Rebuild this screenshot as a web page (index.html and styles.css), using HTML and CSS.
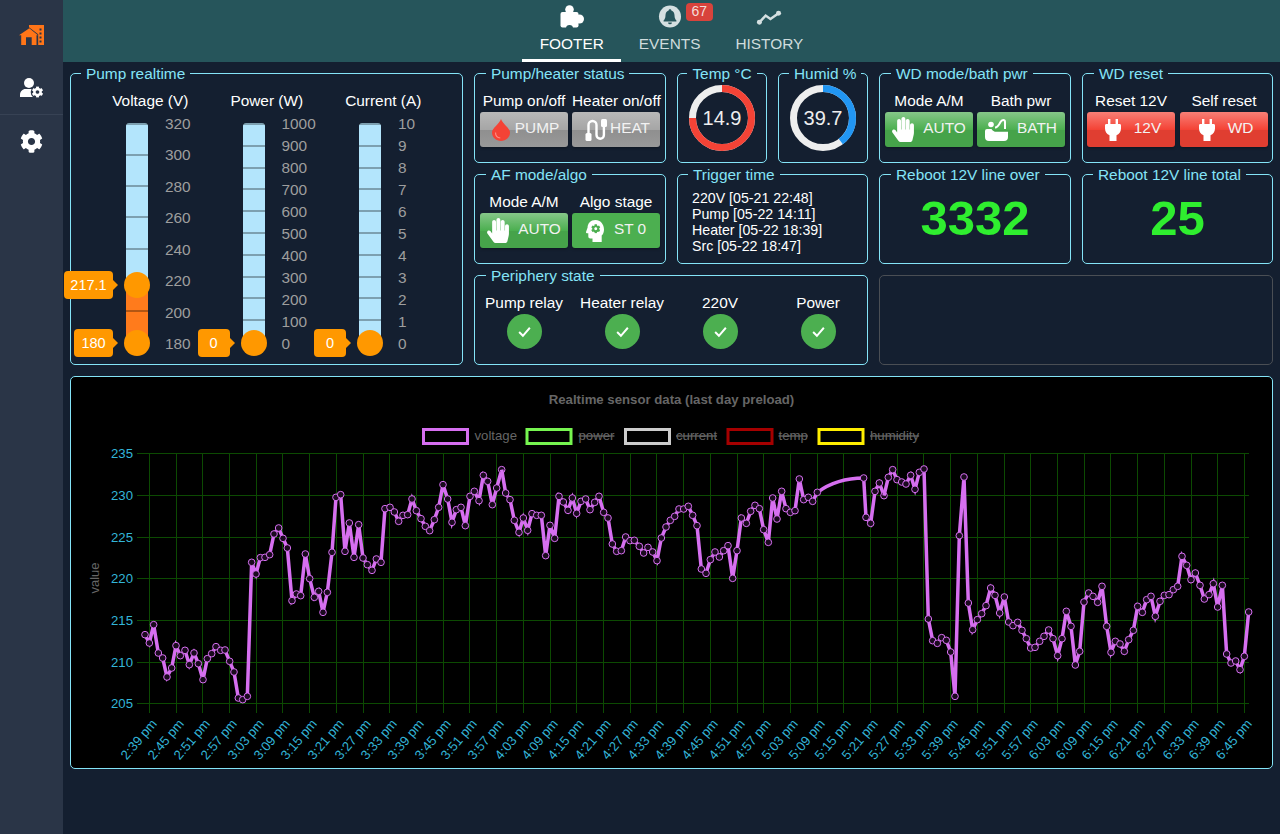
FILE: index.html
```html
<!DOCTYPE html>
<html lang="en">
<head>
<meta charset="utf-8">
<title>Pump dashboard</title>
<link rel="stylesheet" href="styles.css">
</head>
<body>
<svg class="defs" width="0" height="0" aria-hidden="true">
  <symbol id="i-cog" viewBox="0 0 512 512"><path d="M487.4 315.7l-42.6-24.6c4.3-23.2 4.3-47 0-70.2l42.6-24.6c4.9-2.8 7.1-8.6 5.5-14-11.1-35.6-30-67.8-54.7-94.6-3.8-4.1-10-5.1-14.8-2.3L380.8 110c-17.9-15.4-38.5-27.3-60.8-35.1V25.8c0-5.6-3.9-10.5-9.4-11.7-36.7-8.2-74.3-7.8-109.2 0-5.5 1.2-9.4 6.1-9.4 11.7V75c-22.2 7.9-42.8 19.8-60.8 35.1L88.7 85.5c-4.9-2.8-11-1.9-14.8 2.3-24.7 26.7-43.6 58.9-54.7 94.6-1.7 5.4.6 11.2 5.5 14L67.3 221c-4.3 23.2-4.3 47 0 70.2l-42.6 24.6c-4.9 2.8-7.1 8.6-5.5 14 11.1 35.6 30 67.8 54.7 94.6 3.8 4.1 10 5.1 14.8 2.3l42.6-24.6c17.9 15.4 38.5 27.3 60.8 35.1v49.2c0 5.6 3.9 10.5 9.4 11.7 36.7 8.2 74.3 7.8 109.2 0 5.5-1.2 9.4-6.1 9.4-11.7v-49.2c22.2-7.9 42.8-19.8 60.8-35.1l42.6 24.6c4.9 2.8 11 1.9 14.8-2.3 24.7-26.7 43.6-58.9 54.7-94.6 1.5-5.5-.7-11.3-5.6-14.1zM256 336c-44.1 0-80-35.9-80-80s35.9-80 80-80 80 35.9 80 80-35.9 80-80 80z"/></symbol>
  <symbol id="i-hand" viewBox="0 0 448 512"><path d="M408.781 128.007C386.356 127.578 368 146.36 368 168.79V256h-8V79.79c0-22.43-18.356-41.212-40.781-40.783C297.488 39.423 280 57.169 280 79v177h-8V40.79C272 18.36 253.644-.422 231.219.007 209.488.423 192 18.169 192 40v216h-8V80.79c0-22.43-18.356-41.212-40.781-40.783C121.488 40.423 104 58.169 104 80v235.992l-31.648-43.519c-12.993-17.866-38.009-21.817-55.877-8.823-17.865 12.994-21.815 38.01-8.822 55.877l125.601 172.705A48 48 0 0 0 172.073 512h197.59c22.274 0 41.622-15.324 46.724-37.006l26.508-112.66a192.011 192.011 0 0 0 5.104-43.975V168c.001-21.831-17.487-39.577-39.218-39.993z"/></symbol>
  <symbol id="i-plug" viewBox="0 0 16 22"><path d="M3 0h2.400v5h5.200V0H13v5h1.600c.8 0 1.400.6 1.400 1.400v3.100c0 3.300-1.900 5.800-4.500 6.700V22h-7v-5.800C1.900 15.300 0 12.800 0 9.500V6.400C0 5.600.6 5 1.400 5H3z"/></symbol>
  <marker id="dot" markerUnits="userSpaceOnUse" markerWidth="28" markerHeight="28" refX="14" refY="14" viewBox="0 0 28 28"><circle cx="14" cy="14" r="10" fill="#1a0a1e" stroke="#d66ff0" stroke-width="3"/></marker>
</svg>

<div class="app">
  <nav class="sidebar">
    <a class="side-item">
      <svg class="icon-home" viewBox="0 0 25 21"><path fill-rule="evenodd" d="M10.300 3.300L19 10.200h-1.500V20h-4.800v-7.800H7V20H2.200v-9.800H0z"/><path d="M10 0L25 0v20h-5.800V9.200L10 2.200zM20.500 3.500v2h2v-2zM20.500 7.500v2h2v-2zM20.500 11.500v2h2v-2zM20.500 15.500v2h2v-2z" fill-rule="evenodd"/></svg>
    </a>
    <a class="side-item side-item-rule">
      <svg class="icon-user" viewBox="0 0 24 20"><circle cx="9" cy="5" r="5"/><path d="M0 19v-2.500C0 13.500 2.500 11 5.500 11h7c.6 0 1.200.1 1.700.3V19z"/><circle cx="17.500" cy="14" r="6.800" class="icon-user-halo"/><use href="#i-cog" x="11.700" y="8.200" width="11.600" height="11.600"/></svg>
    </a>
    <a class="side-item">
      <svg class="icon-cog"><use href="#i-cog"/></svg>
    </a>
  </nav>

  <div class="main">
    <header class="topbar">
      <a class="tab tab-active">
        <svg class="tab-icon" viewBox="0 0 26 23"><rect x="1.500" y="7" width="18" height="15.500" rx="2"/><circle cx="10.500" cy="4.500" r="4.300"/><circle cx="20.500" cy="14" r="4.500"/><circle class="bell" cx="10.500" cy="23.500" r="3.500"/></svg>
        <span>FOOTER</span>
      </a>
      <a class="tab">
        <svg class="tab-icon" viewBox="0 0 24 24"><circle cx="12" cy="12" r="11.500"/><path class="bell" d="M12 4.500c-.8 0-1.400.6-1.400 1.300C8.400 6.400 7.300 8.500 7.300 10.800c0 3-1 4.500-2 5.500v1h13.400v-1c-1-1-2-2.500-2-5.500 0-2.300-1.100-4.400-3.300-5C13.400 5.100 12.800 4.500 12 4.500zM10 18.200a2 2 0 0 0 4 0z"/></svg>
        <span>EVENTS</span>
        <b class="badge">67</b>
      </a>
      <a class="tab">
        <svg class="tab-icon" viewBox="0 0 26 24"><polyline class="trend" points="3,18 9.500,11 14.500,14.500 23,8.500"/><circle cx="3" cy="18" r="2.600"/><circle cx="23" cy="8.500" r="2.600"/></svg>
        <span>HISTORY</span>
      </a>
    </header>

    <main class="content">
      <section class="dashboard">
        <fieldset class="panel panel-pump">
          <legend class="legend-near">Pump realtime</legend>
          <div class="sliders">
            <div class="slider">
              <div class="slider-title">Voltage (V)</div>
              <div class="slider-body">
                <div class="track">
                  <div class="fill" style="height:26.5%"></div>
                  <i></i><i></i><i></i><i></i><i></i><i></i><i></i><i></i>
                  <div class="thumb" style="bottom:26.5%"><span class="tip tip-wide">217.1</span></div>
                  <div class="thumb" style="bottom:0"><span class="tip tip-mid">180</span></div>
                </div>
                <div class="scale"><span>320</span><span>300</span><span>280</span><span>260</span><span>240</span><span>220</span><span>200</span><span>180</span></div>
              </div>
            </div>
            <div class="slider">
              <div class="slider-title">Power (W)</div>
              <div class="slider-body">
                <div class="track">
                  <i></i><i></i><i></i><i></i><i></i><i></i><i></i><i></i><i></i><i></i><i></i>
                  <div class="thumb" style="bottom:0"><span class="tip">0</span></div>
                </div>
                <div class="scale"><span>1000</span><span>900</span><span>800</span><span>700</span><span>600</span><span>500</span><span>400</span><span>300</span><span>200</span><span>100</span><span>0</span></div>
              </div>
            </div>
            <div class="slider">
              <div class="slider-title">Current (A)</div>
              <div class="slider-body">
                <div class="track">
                  <i></i><i></i><i></i><i></i><i></i><i></i><i></i><i></i><i></i><i></i><i></i>
                  <div class="thumb" style="bottom:0"><span class="tip">0</span></div>
                </div>
                <div class="scale"><span>10</span><span>9</span><span>8</span><span>7</span><span>6</span><span>5</span><span>4</span><span>3</span><span>2</span><span>1</span><span>0</span></div>
              </div>
            </div>
          </div>
        </fieldset>

        <fieldset class="panel">
          <legend>Pump/heater status</legend>
          <div class="pair">
            <div class="control"><div class="caption">Pump on/off</div>
              <button class="btn btn-gray gap-5">
                <svg class="icon-drop" viewBox="0 0 18 22"><path d="M9 0c1.500 5 9 9 9 13.500C18 18.200 14 22 9 22S0 18.200 0 13.500C0 9 7.500 5 9 0z"/><path class="drop-shine" d="M3.500 13.500c0 3 2 5.200 4.800 5.500"/></svg>
                <span>PUMP</span></button></div>
            <div class="control"><div class="caption">Heater on/off</div>
              <button class="btn btn-gray gap-1">
                <svg class="icon-heat" viewBox="0 0 24 24"><path d="M3.500 18V7a4 4 0 0 1 8 0v10a3.700 3.700 0 0 0 7.400 0V6"/><rect x="0.500" y="15" width="6" height="8" rx="1.500"/><rect x="16" y="1" width="6" height="8" rx="1.500"/></svg>
                <span>HEAT</span></button></div>
          </div>
        </fieldset>

        <fieldset class="panel">
          <legend class="legend-center">Temp °C</legend>
          <svg class="gauge" viewBox="0 0 66 66"><circle class="gauge-base" cx="33" cy="33" r="29.500"/><circle class="gauge-arc gauge-red" cx="33" cy="33" r="29.500" pathLength="100" stroke-dasharray="75 100" transform="rotate(-90 33 33)"/><text x="33" y="40">14.9</text></svg>
        </fieldset>

        <fieldset class="panel">
          <legend class="legend-near">Humid %</legend>
          <svg class="gauge" viewBox="0 0 66 66"><circle class="gauge-base" cx="33" cy="33" r="29.500"/><circle class="gauge-arc gauge-blue" cx="33" cy="33" r="29.500" pathLength="100" stroke-dasharray="39.700 100" transform="rotate(-90 33 33)"/><text x="33" y="40">39.7</text></svg>
        </fieldset>

        <fieldset class="panel">
          <legend>WD mode/bath pwr</legend>
          <div class="pair">
            <div class="control"><div class="caption">Mode A/M</div>
              <button class="btn btn-green gap-9"><svg class="icon-hand"><use href="#i-hand"/></svg><span>AUTO</span></button></div>
            <div class="control"><div class="caption">Bath pwr</div>
              <button class="btn btn-green gap-9">
                <svg class="icon-bath" viewBox="0 0 23 23"><circle cx="6" cy="6.500" r="2.800"/><path class="bath-pipe" d="M10 9.500C12 9.500 14 7 15.500 4C17 1 20 1.500 20 4V11"/><path d="M2 11h4.500c1.200 2 3 3 5.500 2.800h11V19a4 4 0 0 1-4 4H4a4 4 0 0 1-4-4v-6a2 2 0 0 1 2-2z"/></svg>
                <span>BATH</span></button></div>
          </div>
        </fieldset>

        <fieldset class="panel">
          <legend>WD reset</legend>
          <div class="pair pair-wide">
            <div class="control"><div class="caption">Reset 12V</div>
              <button class="btn btn-red gap-13"><svg class="icon-plug"><use href="#i-plug"/></svg><span>12V</span></button></div>
            <div class="control"><div class="caption">Self reset</div>
              <button class="btn btn-red gap-13"><svg class="icon-plug"><use href="#i-plug"/></svg><span>WD</span></button></div>
          </div>
        </fieldset>

        <fieldset class="panel">
          <legend>AF mode/algo</legend>
          <div class="pair">
            <div class="control"><div class="caption">Mode A/M</div>
              <button class="btn btn-green gap-9"><svg class="icon-hand"><use href="#i-hand"/></svg><span>AUTO</span></button></div>
            <div class="control"><div class="caption">Algo stage</div>
              <button class="btn btn-flat gap-10">
                <svg class="icon-head" viewBox="0 0 18 22"><path d="M9.500 0C4.600 0 1.600 3.400 1.600 7.600L0 12c-.2.600.2 1.200.9 1.200h1.400v3.400c0 1.100.9 2 2 2h2.200V22h9.200v-6.400c1.500-1.500 2.300-3.700 2.300-6.200C18 4.200 14.400 0 9.500 0z"/><use class="icon-head-cog" href="#i-cog" x="5" y="4" width="9.500" height="9.500"/></svg>
                <span>ST 0</span></button></div>
          </div>
        </fieldset>

        <fieldset class="panel panel-trigger">
          <legend class="legend-near">Trigger time</legend>
          <div class="trigger">220V [05-21 22:48]<br>Pump [05-22 14:11]<br>Heater [05-22 18:39]<br>Src [05-22 18:47]</div>
        </fieldset>

        <fieldset class="panel">
          <legend>Reboot 12V line over</legend>
          <div class="big">3332</div>
        </fieldset>

        <fieldset class="panel">
          <legend class="legend-near">Reboot 12V line total</legend>
          <div class="big">25</div>
        </fieldset>

        <fieldset class="panel panel-periphery">
          <legend>Periphery state</legend>
          <div class="states">
            <div class="state"><div class="caption">Pump relay</div><span class="ok"><svg viewBox="0 0 14 14"><polyline points="2,7.500 5.500,11 12,3.500"/></svg></span></div>
            <div class="state"><div class="caption">Heater relay</div><span class="ok"><svg viewBox="0 0 14 14"><polyline points="2,7.500 5.500,11 12,3.500"/></svg></span></div>
            <div class="state"><div class="caption">220V</div><span class="ok"><svg viewBox="0 0 14 14"><polyline points="2,7.500 5.500,11 12,3.500"/></svg></span></div>
            <div class="state"><div class="caption">Power</div><span class="ok"><svg viewBox="0 0 14 14"><polyline points="2,7.500 5.500,11 12,3.500"/></svg></span></div>
          </div>
        </fieldset>

        <div class="panel-empty"></div>
      </section>

      <section class="chart">
        <svg viewBox="71 377 1201 391" class="chart-svg">
          <text class="c-title" x="671.500" y="403.500">Realtime sensor data (last day preload)</text>

          <g class="c-legend">
            <rect x="423.500" y="429.500" width="44" height="14" stroke="#d66ff0"/><text x="474.500" y="440">voltage</text>
            <rect x="527" y="429.500" width="44" height="14" stroke="#76f550"/><text class="off" x="578.500" y="440">power</text>
            <rect x="625.500" y="429.500" width="44" height="14" stroke="#cccccc"/><text class="off" x="676" y="440">current</text>
            <rect x="728" y="429.500" width="44" height="14" stroke="#a50000"/><text class="off" x="778.500" y="440">temp</text>
            <rect x="819" y="429.500" width="44" height="14" stroke="#ffee00"/><text class="off" x="870" y="440">humidity</text>
          </g>

          <path class="c-grid" d="M137 453.500H1249M137 495.500H1249M137 537.500H1249M137 578.500H1249M137 620.500H1249M137 662.500H1249M137 703.500H1249
          M149.500 453V713M176.500 453V713M202.500 453V713M229.500 453V713M256.500 453V713M282.500 453V713M309.500 453V713M336.500 453V713M363.500 453V713M389.500 453V713M416.500 453V713M443.500 453V713M469.500 453V713M496.500 453V713M523.500 453V713M550.500 453V713M576.500 453V713M603.500 453V713M630.500 453V713M656.500 453V713M683.500 453V713M710.500 453V713M737.500 453V713M763.500 453V713M790.500 453V713M817.500 453V713M843.500 453V713M870.500 453V713M897.500 453V713M923.500 453V713M950.500 453V713M977.500 453V713M1004.500 453V713M1030.500 453V713M1057.500 453V713M1084.500 453V713M1110.500 453V713M1137.500 453V713M1164.500 453V713M1191.500 453V713M1217.500 453V713M1244.500 453V713"/>

          <g class="c-yticks">
            <text x="133" y="458">235</text><text x="133" y="499.500">230</text><text x="133" y="541.500">225</text><text x="133" y="583">220</text><text x="133" y="624.500">215</text><text x="133" y="666.500">210</text><text x="133" y="708">205</text>
          </g>
          <text class="c-axis" transform="translate(99 578) rotate(-90)">value</text>

          <g class="c-xticks">
            <text transform="translate(157.500 724) rotate(-50)">2:39 pm</text><text transform="translate(184.500 724) rotate(-50)">2:45 pm</text><text transform="translate(210.500 724) rotate(-50)">2:51 pm</text><text transform="translate(237.500 724) rotate(-50)">2:57 pm</text><text transform="translate(264.500 724) rotate(-50)">3:03 pm</text><text transform="translate(290.500 724) rotate(-50)">3:09 pm</text><text transform="translate(317.500 724) rotate(-50)">3:15 pm</text><text transform="translate(344.500 724) rotate(-50)">3:21 pm</text><text transform="translate(371.500 724) rotate(-50)">3:27 pm</text><text transform="translate(397.500 724) rotate(-50)">3:33 pm</text><text transform="translate(424.500 724) rotate(-50)">3:39 pm</text><text transform="translate(451.500 724) rotate(-50)">3:45 pm</text><text transform="translate(477.500 724) rotate(-50)">3:51 pm</text><text transform="translate(504.500 724) rotate(-50)">3:57 pm</text><text transform="translate(531.500 724) rotate(-50)">4:03 pm</text><text transform="translate(558.500 724) rotate(-50)">4:09 pm</text><text transform="translate(584.500 724) rotate(-50)">4:15 pm</text><text transform="translate(611.500 724) rotate(-50)">4:21 pm</text><text transform="translate(638.500 724) rotate(-50)">4:27 pm</text><text transform="translate(664.500 724) rotate(-50)">4:33 pm</text><text transform="translate(691.500 724) rotate(-50)">4:39 pm</text><text transform="translate(718.500 724) rotate(-50)">4:45 pm</text><text transform="translate(745.500 724) rotate(-50)">4:51 pm</text><text transform="translate(771.500 724) rotate(-50)">4:57 pm</text><text transform="translate(798.500 724) rotate(-50)">5:03 pm</text><text transform="translate(825.500 724) rotate(-50)">5:09 pm</text><text transform="translate(851.500 724) rotate(-50)">5:15 pm</text><text transform="translate(878.500 724) rotate(-50)">5:21 pm</text><text transform="translate(905.500 724) rotate(-50)">5:27 pm</text><text transform="translate(931.500 724) rotate(-50)">5:33 pm</text><text transform="translate(958.500 724) rotate(-50)">5:39 pm</text><text transform="translate(985.500 724) rotate(-50)">5:45 pm</text><text transform="translate(1012.500 724) rotate(-50)">5:51 pm</text><text transform="translate(1038.500 724) rotate(-50)">5:57 pm</text><text transform="translate(1065.500 724) rotate(-50)">6:03 pm</text><text transform="translate(1092.500 724) rotate(-50)">6:09 pm</text><text transform="translate(1118.500 724) rotate(-50)">6:15 pm</text><text transform="translate(1145.500 724) rotate(-50)">6:21 pm</text><text transform="translate(1172.500 724) rotate(-50)">6:27 pm</text><text transform="translate(1199.500 724) rotate(-50)">6:33 pm</text><text transform="translate(1225.500 724) rotate(-50)">6:39 pm</text><text transform="translate(1252.500 724) rotate(-50)">6:45 pm</text>
          </g>

          <g transform="translate(70 375) scale(.33333)">
            <path class="c-line" marker-start="url(#dot)" marker-mid="url(#dot)" marker-end="url(#dot)" d="M225 779L238 804 251 749 265 834 278 849 291 906 305 879 318 812 331 842 345 826 358 869 372 834 385 866 399 914 412 851 425 836 438 815 452 826 465 825 479 859 492 891 505 969 518 974 532 964 545 562 558 597 571 548 585 547 599 539 612 477 626 459 639 490 652 519 666 677 679 657 692 662 706 537 719 611 733 667 746 649 759 712 772 652 786 532 798 367 812 359 825 529 838 444 852 547 866 449 879 549 892 569 906 586 919 552 933 562 945 401 960 397 973 411 986 439 999 421 1013 419 1026 372 1039 407 1053 431 1066 454 1079 467 1093 434 1106 397 1119 329 1133 372 1146 442 1159 404 1173 397 1186 452 1200 364 1213 349 1227 377 1240 301 1253 319 1267 389 1280 339 1295 284"/>
          </g>
          <g transform="translate(500 440) scale(.33333)">
            <path class="c-line" marker-mid="url(#dot)" marker-end="url(#dot)" d="M5 89L17 159 30 179 43 241 57 277 70 234 83 271 96 221 110 226 124 226 137 347 150 256 164 295 177 169 190 186 204 211 217 174 230 220 243 184 257 177 270 209 284 187 297 169 311 217 324 234 337 312 350 334 364 332 377 291 390 302 403 301 418 319 431 339 444 322 458 336 471 362 484 294 498 261 511 241 524 229 537 207 551 207 565 199 578 226 591 257 604 387 618 400 631 359 645 336 658 351 671 332 684 317 698 415 711 332 724 234 739 250 752 214 765 196 778 206 791 269 805 307 818 174 831 237 845 154 858 206 871 217 885 212 898 117 911 179 925 172 938 184 952 157C1000 122 1045 114 1091 114L1098 232 1112 250 1125 154 1138 129 1152 167"/>
          </g>
          <g transform="translate(880 440) scale(.33333)">
            <path class="c-line" marker-mid="url(#dot)" marker-end="url(#dot)" d="M12 167L25 112 38 89 51 119 65 126 78 132 92 106 105 148 118 97 132 87 145 537 158 602 172 610 185 593 199 601 212 636 225 769 238 287 252 111 265 489 278 569 292 539 305 521 318 497 332 444 345 466 359 519 373 471 386 546 399 557 413 547 426 571 439 596 452 624 465 622 479 604 492 589 506 570 519 596 533 647 546 596 559 514 573 559 586 675 599 634 612 486 626 459 639 469 653 487 666 439 680 559 693 637 706 604 720 612 733 634 746 599 760 571 773 499 787 517 800 479 813 469 826 529 840 484 853 466 867 464 880 449 893 439 906 349 920 376 933 419 946 399 960 436 973 477 987 464 1000 431 1013 501 1027 436 1040 642 1053 669 1067 663 1080 689 1093 649 1106 516"/>
          </g>
        </svg>
      </section>
    </main>
  </div>
</div>
</body>
</html>
```

FILE: styles.css
```css
* { box-sizing: border-box; }

html, body {
  margin: 0;
  height: 100%;
  overflow: hidden;
}

body {
  background: #141f30;
  color: #fff;
  font-family: "Liberation Sans", Arial, sans-serif;
  font-size: 15.4px;
}

.defs { position: absolute; }

.app {
  display: flex;
  height: 100vh;
}

/* sidebar */
.sidebar {
  width: 63px;
  flex: none;
  background: #2a3547;
  padding-top: 9px;
  display: flex;
  flex-direction: column;
}

.side-item {
  height: 53px;
  display: flex;
  align-items: center;
  justify-content: center;
  fill: #fff;
}

.side-item-rule {
  border-bottom: 1px solid #374254;
}

.icon-home { width: 25px; height: 21px; fill: #ff7518; }
.icon-user { width: 24px; height: 20px; }
.icon-user-halo { fill: #2a3547; }
.icon-cog { width: 23px; height: 23px; }

/* top bar */
.main {
  flex: 1;
  min-width: 0;
}

.topbar {
  height: 62px;
  background: #26555b;
  display: flex;
  justify-content: center;
}

.tab {
  position: relative;
  padding: 5px 17.5px 0;
  border-bottom: 3px solid transparent;
  display: flex;
  flex-direction: column;
  align-items: center;
  color: #cfdcdd;
  fill: #d5e0e1;
}

.tab-active {
  border-bottom-color: #fff;
  color: #fff;
  fill: #fff;
}

.tab-icon {
  width: 26px;
  height: 23px;
  margin-bottom: 7px;
}

.tab .bell { fill: #26555b; }

.trend {
  fill: none;
  stroke: #d5e0e1;
  stroke-width: 2.6;
}

.badge {
  position: absolute;
  left: 64.5px;
  top: 3px;
  width: 27px;
  height: 18px;
  border-radius: 4px;
  background: #d8433c;
  color: #f3dcda;
  font-size: 14px;
  font-weight: normal;
  line-height: 17px;
  text-align: center;
}

/* panels */
.content {
  padding: 3px 7px 0;
}

.dashboard {
  display: grid;
  grid-template-columns: 393px 192px 90px 90px 192px 191px;
  grid-auto-rows: 98px;
  column-gap: 11px;
  row-gap: 3px;
}

.panel {
  margin: 0;
  padding: 0;
  min-width: 0;
  border: 1px solid #84e4f7;
  border-radius: 5px;
}

.panel legend {
  margin-left: 11px;
  padding: 0 5px;
  color: #84e4f7;
  line-height: 17px;
  white-space: nowrap;
}

.panel legend.legend-near { margin-left: 10px; }
.panel legend.legend-center { margin-left: auto; margin-right: auto; }

.panel-pump {
  grid-row: span 3;
}

.panel-trigger {
  grid-column: span 2;
}

.panel-periphery {
  grid-column: 2 / span 3;
}

.panel-empty {
  grid-column: 5 / span 2;
  margin-top: 8px;
  border: 1px solid #4a4e54;
  border-radius: 5px;
}

/* pump sliders */
.sliders {
  display: grid;
  grid-template-columns: repeat(3, 116.5px);
  padding: 10px 0 0 21px;
}

.slider-title {
  text-align: center;
  line-height: 18px;
  margin-bottom: 13px;
}

.slider-body {
  display: flex;
  padding-left: 34px;
  gap: 17px;
}

.track {
  position: relative;
  width: 22px;
  height: 220px;
  flex: none;
  background: #b3e5fc;
  border-radius: 3px 3px 0 0;
  display: flex;
  flex-direction: column;
  justify-content: space-between;
}

.track i {
  position: relative;
  height: 2px;
  background: rgba(0, 0, 0, .3);
}

.fill {
  position: absolute;
  left: 0;
  right: 0;
  bottom: 0;
  background: #ff7b1c;
}

.thumb {
  position: absolute;
  left: -2px;
  width: 26px;
  height: 26px;
  margin-bottom: -13px;
  border-radius: 50%;
  background: #ff9800;
}

.tip {
  position: absolute;
  right: 100%;
  top: -1px;
  margin-right: 11px;
  min-width: 32px;
  height: 28px;
  border-radius: 4px;
  background: #ff9800;
  color: #fff;
  font-size: 14.5px;
  line-height: 29px;
  text-align: center;
  z-index: 2;
}

.tip::after {
  content: "";
  position: absolute;
  left: 100%;
  top: 9px;
  border: 5px solid transparent;
  border-left-color: #ff9800;
  border-right-width: 0;
}

.tip-wide { width: 49px; }
.tip-mid { width: 39px; }

.scale {
  height: 236px;
  margin-top: -7px;
  display: flex;
  flex-direction: column;
  justify-content: space-between;
  color: #9e9e9e;
  line-height: 16px;
}

/* buttons */
.pair {
  display: flex;
  justify-content: center;
  gap: 4px;
  padding-top: 10px;
}

.pair-wide { gap: 5px; }

.control { width: 88px; }

.caption {
  line-height: 18px;
  margin-bottom: 2px;
  text-align: center;
  white-space: nowrap;
}

.btn {
  width: 88px;
  height: 35px;
  border: 0;
  border-radius: 3px;
  padding: 0;
  display: flex;
  align-items: center;
  justify-content: center;
  font: inherit;
  color: #f2f2f2;
  fill: #fff;
  box-shadow: 0 1px 3px rgba(0, 0, 0, .35);
}

.btn span { margin-bottom: 3px; }

.gap-1 { gap: 1px; }
.gap-5 { gap: 5px; }
.gap-9 { gap: 9px; }
.gap-10 { gap: 10px; }
.gap-13 { gap: 13px; }

.btn-gray { background: linear-gradient(#b8b8b8, #a6a6a6 50%, #8f8f8f 52%, #999 100%); padding-left: 3px; }
.btn-green { background: linear-gradient(#86c789, #4caf50 50%, #46a34a 52%, #46a34a 100%); }
.btn-red { background: linear-gradient(#f87f76, #f44336 50%, #e03e31 52%, #e03e31 100%); padding-left: 4px; }
.btn-flat { background: #4caf50; }

.icon-drop { width: 18px; height: 22px; fill: #f44336; }
.drop-shine { fill: none; stroke: #ff8a80; stroke-width: 1.200; }
.icon-heat { width: 24px; height: 24px; }
.icon-heat path { fill: none; stroke: #fff; stroke-width: 2.400; }
.icon-hand { width: 22px; height: 25px; }
.icon-head { width: 18px; height: 22px; }
.icon-head-cog { fill: #4caf50; }
.icon-bath { width: 23px; height: 23px; }
.bath-pipe { fill: none; stroke: #fff; stroke-width: 2; }
.icon-plug { width: 16px; height: 22px; }

/* gauges */
.gauge {
  display: block;
  width: 66px;
  height: 66px;
  margin: 3px auto 0;
}

.gauge circle {
  fill: none;
  stroke-width: 7;
}

.gauge-base { stroke: #eee; }
.gauge-red { stroke: #f44336; }
.gauge-blue { stroke: #2196f3; }

.gauge text {
  fill: #eee;
  font-size: 20px;
  text-anchor: middle;
}

/* trigger list */
.trigger {
  padding: 7px 0 0 14px;
  font-size: 14.2px;
  line-height: 16px;
}

/* counters */
.big {
  padding-top: 11px;
  color: #2fee2f;
  font-size: 49px;
  font-weight: bold;
  line-height: 48px;
  text-align: center;
}

/* periphery */
.states {
  display: grid;
  grid-template-columns: repeat(4, 98px);
  padding-top: 10px;
}

.state {
  display: flex;
  flex-direction: column;
  align-items: center;
}

.ok {
  width: 35px;
  height: 35px;
  border-radius: 50%;
  background: #4caf50;
  display: flex;
  align-items: center;
  justify-content: center;
}

.ok svg {
  width: 15px;
  height: 15px;
  fill: none;
  stroke: #fff;
  stroke-width: 1.800;
}

/* chart */
.chart {
  margin-top: 11px;
  height: 393px;
  background: #000;
  border: 1px solid #84e4f7;
  border-radius: 5px;
  overflow: hidden;
}

.chart-svg {
  display: block;
  width: 1201px;
  height: 391px;
}

.c-title {
  fill: #666;
  font-size: 13.200px;
  font-weight: bold;
  text-anchor: middle;
}

.c-legend rect {
  fill: none;
  stroke-width: 3;
}

.c-legend text {
  fill: #666;
  font-size: 13.200px;
}

.c-legend .off { text-decoration: line-through; }

.c-grid {
  fill: none;
  stroke: #0c4a02;
  stroke-width: 1;
}

.c-yticks text {
  fill: #33b5d8;
  font-size: 13.200px;
  text-anchor: end;
}

.c-xticks text {
  fill: #33b5d8;
  font-size: 13.200px;
  text-anchor: end;
}

.c-axis {
  fill: #666;
  font-size: 13px;
  text-anchor: middle;
}

.c-line {
  fill: none;
  stroke: #d66ff0;
  stroke-width: 10.500;
}
```
